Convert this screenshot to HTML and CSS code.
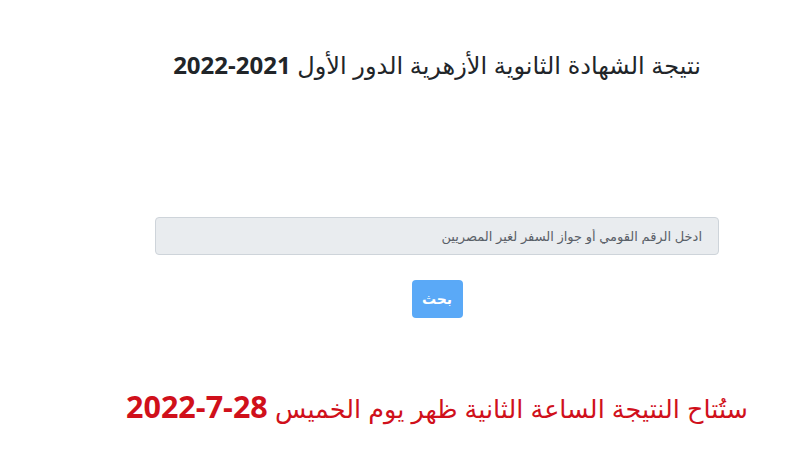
FILE: index.html
```html
<!DOCTYPE html>
<html lang="ar" dir="rtl">
<head>
<meta charset="utf-8">
<link rel="stylesheet" href="styles.css">
</head>
<body>
<main class="page">
  <h1 class="title">نتيجة الشهادة الثانوية الأزهرية الدور الأول <b class="num">2021-2022</b></h1>
  <form class="search">
    <input class="field" type="text" placeholder="ادخل الرقم القومي أو جواز السفر لغير المصريين" disabled>
    <button class="btn" type="button">بحث</button>
  </form>
  <p class="notice">ستُتاح النتيجة الساعة الثانية ظهر يوم الخميس <b class="num">28-7-2022</b></p>
</main>
</body>
</html>
```
FILE: styles.css
```css
html, body {
  margin: 0;
  background: #fff;
}
body {
  font-family: "Liberation Sans", "DejaVu Sans", sans-serif;
  color: #212529;
}
.page {
  padding-left: 74px;
  display: flex;
  flex-direction: column;
  align-items: center;
}
.title {
  margin: 45px 0 0;
  font-size: 24px;
  font-weight: normal;
  line-height: 40px;
}
.num {
  font-family: "Open Sans", "Liberation Sans", sans-serif;
  font-weight: bold;
}
.title .num {
  font-size: 24px;
  letter-spacing: 1.7px;
}
.search {
  margin-top: 131px;
  display: flex;
  flex-direction: column;
  align-items: center;
}
.field {
  box-sizing: border-box;
  width: 564px;
  height: 38px;
  padding: 0 16px;
  border: 1px solid #ced4da;
  border-radius: 4px;
  background: #e9ecef;
  font-family: "Liberation Sans", "DejaVu Sans", sans-serif;
  font-size: 13px;
  direction: rtl;
}
.field::placeholder {
  color: #5a6068;
}
.btn {
  margin-top: 25px;
  width: 51px;
  height: 38px;
  border: 0;
  border-radius: 4px;
  background: #5aa9f7;
  color: #fff;
  font-family: "Liberation Sans", "DejaVu Sans", sans-serif;
  font-size: 14px;
  font-weight: bold;
}
.notice {
  margin: 68px 0 0;
  color: #d0101b;
  font-size: 25.5px;
  line-height: 40px;
}
.notice .num {
  font-size: 30.5px;
  letter-spacing: 1.6px;
}
```
